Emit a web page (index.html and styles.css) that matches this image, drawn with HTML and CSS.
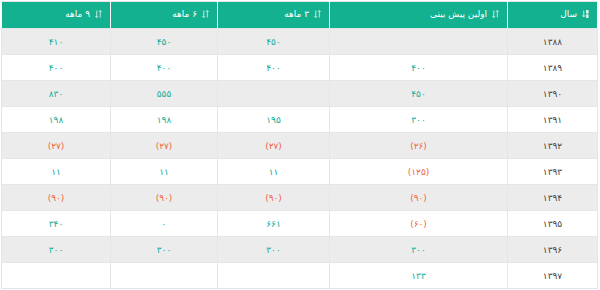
FILE: index.html
```html
<!DOCTYPE html>
<html lang="fa" dir="rtl">
<head>
<meta charset="utf-8">
<link rel="stylesheet" href="styles.css">
</head>
<body>
<table class="grid">
  <colgroup>
    <col class="c-year">
    <col class="c-pred">
    <col class="c-3">
    <col class="c-6">
    <col class="c-9">
  </colgroup>
  <thead>
    <tr>
      <th><span class="hd"><svg class="ico" viewBox="0 0 8 10"><path d="M2 1v7M0.5 6.5L2 8.5L3.5 6.5" /><rect x="5" y="1" width="2" height="3"/><rect x="5" y="6" width="2" height="3"/></svg>سال</span></th>
      <th><span class="hd"><svg class="ico" viewBox="0 0 8 10"><path d="M2 1v8M0.5 7.5L2 9L3.5 7.5M6 9V1M4.5 2.5L6 1L7.5 2.5"/></svg>اولین پیش بینی</span></th>
      <th><span class="hd"><svg class="ico" viewBox="0 0 8 10"><path d="M2 1v8M0.5 7.5L2 9L3.5 7.5M6 9V1M4.5 2.5L6 1L7.5 2.5"/></svg>۳ ماهه</span></th>
      <th><span class="hd"><svg class="ico" viewBox="0 0 8 10"><path d="M2 1v8M0.5 7.5L2 9L3.5 7.5M6 9V1M4.5 2.5L6 1L7.5 2.5"/></svg>۶ ماهه</span></th>
      <th><span class="hd"><svg class="ico" viewBox="0 0 8 10"><path d="M2 1v8M0.5 7.5L2 9L3.5 7.5M6 9V1M4.5 2.5L6 1L7.5 2.5"/></svg>۹ ماهه</span></th>
    </tr>
  </thead>
  <tbody>
    <tr><td class="yr">۱۳۸۸</td><td></td><td class="pos">۴۵۰</td><td class="pos">۴۵۰</td><td class="pos">۴۱۰</td></tr>
    <tr><td class="yr">۱۳۸۹</td><td class="pos">۴۰۰</td><td class="pos">۴۰۰</td><td class="pos">۴۰۰</td><td class="pos">۴۰۰</td></tr>
    <tr><td class="yr">۱۳۹۰</td><td class="pos">۴۵۰</td><td></td><td class="pos">۵۵۵</td><td class="pos">۸۳۰</td></tr>
    <tr><td class="yr">۱۳۹۱</td><td class="pos">۳۰۰</td><td class="pos">۱۹۵</td><td class="pos">۱۹۸</td><td class="pos">۱۹۸</td></tr>
    <tr><td class="yr">۱۳۹۲</td><td class="neg">(۲۶)</td><td class="neg">(۲۷)</td><td class="neg">(۲۷)</td><td class="neg">(۲۷)</td></tr>
    <tr><td class="yr">۱۳۹۳</td><td class="neg">(۱۲۵)</td><td class="pos">۱۱</td><td class="pos">۱۱</td><td class="pos">۱۱</td></tr>
    <tr><td class="yr">۱۳۹۴</td><td class="neg">(۹۰)</td><td class="neg">(۹۰)</td><td class="neg">(۹۰)</td><td class="neg">(۹۰)</td></tr>
    <tr><td class="yr">۱۳۹۵</td><td class="neg">(۶۰)</td><td class="pos">۶۶۱</td><td class="pos">۰</td><td class="pos">۳۴۰</td></tr>
    <tr><td class="yr">۱۳۹۶</td><td class="pos">۳۰۰</td><td class="pos">۳۰۰</td><td class="pos">۳۰۰</td><td class="pos">۳۰۰</td></tr>
    <tr><td class="yr">۱۳۹۷</td><td class="pos">۱۳۳</td><td></td><td></td><td></td></tr>
  </tbody>
</table>
</body>
</html>
```
FILE: styles.css
```css
html, body {
  margin: 0;
  padding: 0;
  background: #ffffff;
}
body {
  padding: 1px 2px 0 2px;
  font-family: "DejaVu Sans", "Noto Sans", sans-serif;
}
.grid {
  width: 596px;
  border-collapse: collapse;
  table-layout: fixed;
  direction: rtl;
  border: 1px solid #e3e7ea;
}
.c-year { width: 90px; }
.c-pred { width: 178px; }
.c-3 { width: 112px; }
.c-6 { width: 107px; }
.c-9 { width: 109px; }
.grid th {
  background: #13b18f;
  color: #ffffff;
  font-weight: normal;
  font-size: 9px;
  height: 26px;
  padding: 0 8px 0 4px;
  text-align: right;
  white-space: nowrap;
  border-left: 1px solid #ffffff;
  border-right: 1px solid #ffffff;
  border-bottom: 1px solid #e3e7ea;
}
.hd {
  display: inline-flex;
  align-items: center;
  gap: 5px;
}
.ico {
  width: 7px;
  height: 10px;
  fill: #ffffff;
  stroke: #ffffff;
  stroke-width: 1;
  opacity: 0.85;
}
.ico path { fill: none; }
.grid td {
  height: 25px;
  padding: 0;
  text-align: center;
  font-size: 9px;
  border: 1px solid #e3e7ea;
}
.grid tbody tr:nth-child(odd) td {
  background: #ececec;
}
.yr { color: #444444; }
.pos { color: #13ad98; }
.neg { color: #f0643f; }
```
